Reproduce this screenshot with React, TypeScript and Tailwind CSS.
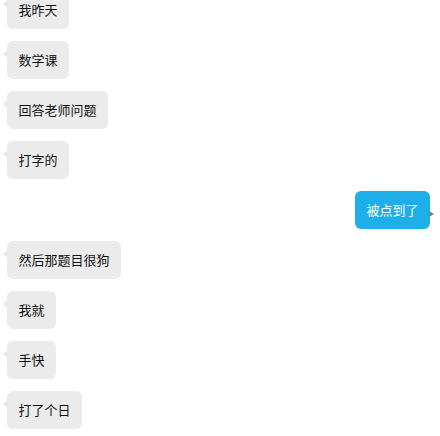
const messages: { text: string; mine?: boolean }[] = [
  { text: '我昨天' },
  { text: '数学课' },
  { text: '回答老师问题' },
  { text: '打字的' },
  { text: '被点到了', mine: true },
  { text: '然后那题目很狗' },
  { text: '我就' },
  { text: '手快' },
  { text: '打了个日' },
]

function Bubble({ text, mine }: { text: string; mine?: boolean }) {
  if (mine) {
    return (
      <div className="flex justify-end pr-[10px]">
        <div className="relative h-[38px] flex items-center px-[11.5px] rounded-[6px] bg-[#1eaee9] text-white text-[13px]">
          {text}
          {/* tail */}
          <span className="absolute right-[-4px] top-[20px] w-0 h-0 border-y-[3px] border-y-transparent border-l-[5px] border-l-[#5d8a8a]" />
        </div>
      </div>
    )
  }
  return (
    <div className="flex pl-[7px]">
      <div className="relative h-[38px] flex items-center px-[11.5px] rounded-[6px] bg-[#ebebeb] text-[#111] text-[13px]">
        {text}
        <span className="absolute left-[-4px] top-[10px] w-0 h-0 border-y-[3px] border-y-transparent border-r-[4px] border-r-[#e4e4e4]" />
      </div>
    </div>
  )
}

export default function App() {
  return (
    <div
      className="w-[440px] h-[436px] overflow-hidden bg-white"
      style={{ fontFamily: '"Noto Sans CJK SC", "Noto Sans", sans-serif' }}
    >
      <div className="flex flex-col gap-[12px] mt-[-9px]">
        {messages.map((m, i) => (
          <Bubble key={i} text={m.text} mine={m.mine} />
        ))}
      </div>
    </div>
  )
}
